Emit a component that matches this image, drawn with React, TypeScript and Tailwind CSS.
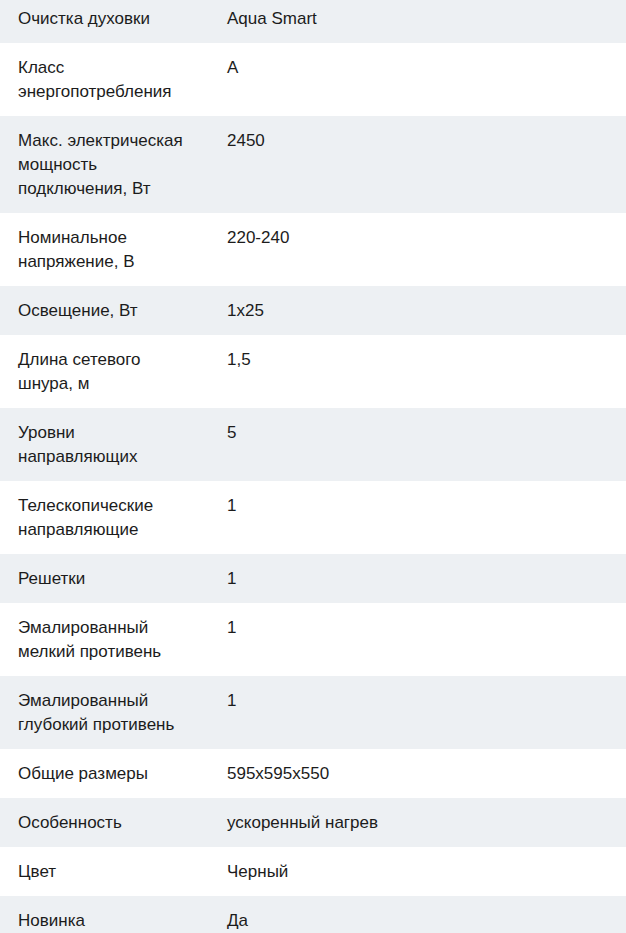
// Характеристики духового шкафа

const specs: [string, string][] = [
  ["Очистка духовки", "Aqua Smart"],
  ["Класс энергопотребления", "A"],
  ["Макс. электрическая мощность подключения, Вт", "2450"],
  ["Номинальное напряжение, В", "220-240"],
  ["Освещение, Вт", "1x25"],
  ["Длина сетевого шнура, м", "1,5"],
  ["Уровни направляющих", "5"],
  ["Телескопические направляющие", "1"],
  ["Решетки", "1"],
  ["Эмалированный мелкий противень", "1"],
  ["Эмалированный глубокий противень", "1"],
  ["Общие размеры", "595x595x550"],
  ["Особенность", "ускоренный нагрев"],
  ["Цвет", "Черный"],
  ["Новинка", "Да"],
];

function App() {
  return (
    <div className="h-[933px] w-[626px] overflow-hidden bg-white font-['Liberation_Sans',Arial,sans-serif] text-[17px] leading-[24px] text-[#1c1c1c]">
      <div className="-mt-[6px] flex flex-col">
        {specs.map(([label, value], i) => (
          <div
            key={label}
            className={"flex " + (i % 2 === 0 ? "bg-[#edf0f3]" : "bg-white")}
          >
            <div className="w-[209px] shrink-0 px-[18px] py-[12.5px]">{label}</div>
            <div className="flex-1 px-[18px] py-[12.5px]">{value}</div>
          </div>
        ))}
      </div>
    </div>
  );
}

export default App;
